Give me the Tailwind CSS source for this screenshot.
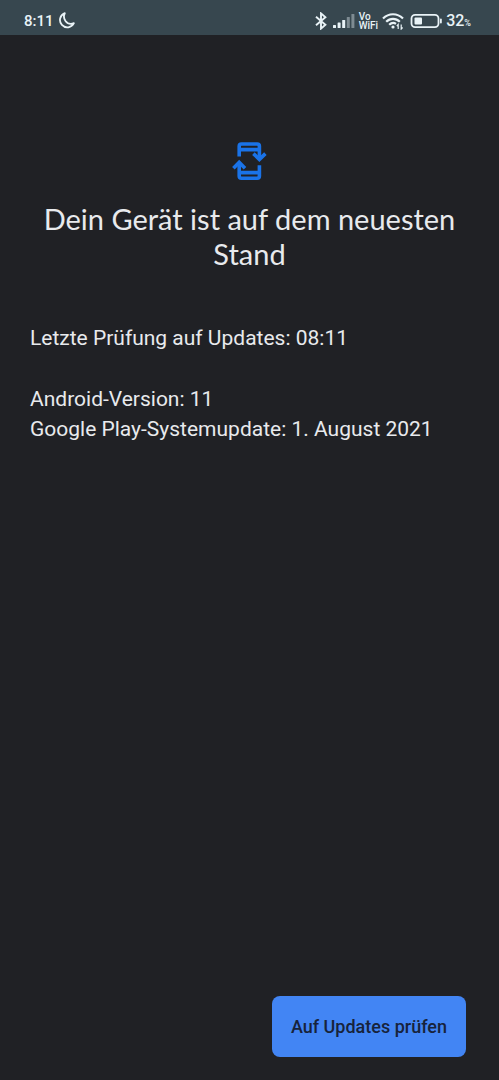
<!DOCTYPE html>
<html lang="de">
<head>
<meta charset="utf-8">
<meta name="viewport" content="width=device-width, initial-scale=1">
<title>Systemupdate</title>
<script src="https://cdn.jsdelivr.net/npm/@tailwindcss/browser@4"></script>
</head>
<body class="flex min-h-screen flex-col bg-[#202125] font-['Roboto',sans-serif] text-[#e8eaed]">
  <header class="flex h-[35px] items-center justify-between bg-[#37474f] pt-1.5 pr-7 pl-6 text-[#e9f3f7]">
    <div class="flex items-center gap-1">
      <span class="text-[15px] leading-5 font-medium">8:11</span>
      <svg class="size-[17px]" viewBox="0 0 17 17" fill="none" stroke="currentColor" stroke-width="1.8" stroke-linejoin="round" aria-label="Nicht stören"><path d="M6.8 1.2A7.3 7.3 0 1 0 15.9 11.2C12.6 12.6 9.4 11.6 7.5 9C5.8 6.5 5.6 3.4 6.8 1.2Z"/></svg>
    </div>
    <div class="flex items-center">
      <svg class="mr-1.5 h-[18px] w-3" viewBox="0 0 12 18" fill="none" stroke="currentColor" stroke-width="1.9" aria-label="Bluetooth"><path d="M1 4.8L10.4 12.8L6 16.6V1.4L10.4 5.2L1 13.2"/></svg>
      <svg class="mr-1 h-4 w-[22px]" viewBox="0 0 22 16" fill="currentColor" aria-label="Mobilfunk"><rect y="12" width="3" height="3" rx=".5"/><rect x="4.6" y="9.5" width="3" height="5.5" rx=".5"/><rect x="9.2" y="7" width="3" height="8" rx=".5"/><rect x="13.8" y="4" width="3" height="11" rx=".5" opacity=".4"/><rect x="18.4" y="1" width="3" height="14" rx=".5" opacity=".4"/></svg>
      <span class="mr-1 flex flex-col text-[10px] leading-[9px] font-medium"><span>Vo</span><span>WiFi</span></span>
      <svg class="mr-1.5 h-[18px] w-[22px]" viewBox="0 0 22 18" fill="none" stroke="currentColor" stroke-width="2.2" aria-label="WLAN"><path d="M1 6.5C6.7 .8 15.3 .8 21 6.5M4.2 9.8C8.2 5.8 13.8 5.8 17.8 9.8M7.2 12.8C9.5 10.5 12 10.4 14 11.8"/><circle cx="11" cy="15" r="1.6" fill="currentColor" stroke="none"/><path stroke-width="1.2" d="M16.2 17V12.5L14.8 14M19.2 12.5V17L20.6 15.5"/></svg>
      <svg class="mr-1 h-4 w-[32px]" viewBox="0 0 32 16" fill="none" aria-label="Akku"><rect x="1.5" y="1.8" width="27" height="12.4" rx="3.6" stroke="currentColor" stroke-width="1.8"/><rect x="4.5" y="4.5" width="7.5" height="7" rx="1" fill="currentColor"/><rect x="30" y="5.5" width="1.8" height="5" rx=".9" fill="currentColor"/></svg>
      <span class="flex items-baseline text-base leading-5 font-medium">32<span class="text-[9px] leading-none">%</span></span>
    </div>
  </header>
  <main class="flex flex-1 flex-col px-[30px] pt-[106px]">
    <svg class="h-10 w-9 self-center" viewBox="0 0 36 40" fill="none" stroke="#1a73e8" stroke-width="3.6" aria-hidden="true"><path stroke-linejoin="round" d="M7.2 15.6V5.2Q7.2 3 9.4 3H25.2Q27.4 3 27.4 5.2V17.5M27.4 24.2V35Q27.4 37.2 25.2 37.2H9.4Q7.2 37.2 7.2 35V23M7.2 8.6H27.4M7.2 31.6H27.4"/><path d="M21.4 12.6L27.4 18.4L33.4 12.6M1.4 27.2L7.2 21.4L13 27.2"/></svg>
    <h1 class="mt-5 text-center font-['Lato','Roboto',sans-serif] text-[29px] leading-[35px]">Dein Gerät ist auf dem neuesten Stand</h1>
    <div class="mt-[52px] text-[21px] leading-[30px]">
      <p>Letzte Prüfung auf Updates: 08:11</p>
      <p class="mt-[31px]">Android-Version: 11</p>
      <p>Google Play-Systemupdate: 1. August 2021</p>
    </div>
  </main>
  <footer class="flex justify-end pr-[33px] pb-[23px]">
    <button type="button" class="h-[61px] rounded-lg bg-[#4285f4] px-[19px] text-lg font-medium text-[#17233b]">Auf Updates prüfen</button>
  </footer>
</body>
</html>
